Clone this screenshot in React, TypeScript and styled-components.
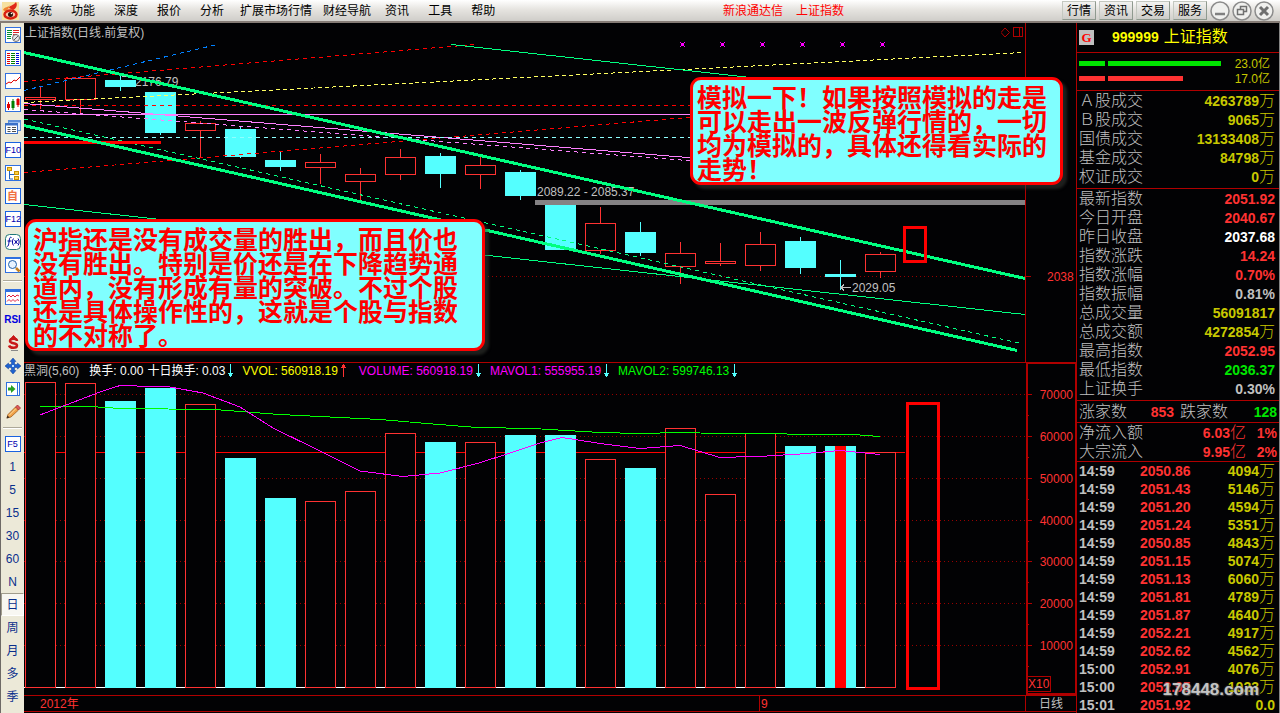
import React from "react";
import styled, { createGlobalStyle, css } from "styled-components";

const RED = "#ff3232";
const LINE = "#b00000";
const CYAN = "#54ffff";
const GREEN = "#00ff80";
const GRAY = "#c0c0c0";
const OLIVE = "#c8c800";
const LIME = "#00e600";

const GlobalStyle = createGlobalStyle`
  * { box-sizing: border-box; }
  body {
    margin: 0;
    background: #020204;
    color: ${GRAY};
    font-family: "Liberation Sans", "Noto Sans CJK SC", sans-serif;
    font-size: 12px;
    line-height: 16px;
  }
  button { font-family: inherit; margin: 0; }
`;

/* ---------- page frame ---------- */

const Page = styled.div`
  display: flex;
  flex-direction: column;
  min-height: 100vh;
`;

const Body = styled.div`
  display: flex;
  flex: 1;
`;

/* ---------- menu bar ---------- */

const MenuBar = styled.header`
  display: flex;
  align-items: center;
  height: 23px;
  padding-left: 2px;
  background: linear-gradient(#ffffff, #e6e4e0 45%, #cfcdc9);
  border-bottom: 2px solid #857c76;
`;

const Menu = styled.nav`
  display: flex;
`;

const MenuItem = styled.button<{ $wide?: boolean }>`
  border: 0;
  background: none;
  color: #000;
  font-size: 12px;
  line-height: 20px;
  padding: ${(p) => (p.$wide ? "0 5px 0 6px" : "0 10px 0 9px")};
`;

const TitleLinks = styled.div`
  display: flex;
  flex: 1;
  justify-content: center;
  gap: 13px;
`;

const TitleLink = styled.a`
  color: #f00;
  text-decoration: none;
  line-height: 20px;
`;

const QuickButtons = styled.div`
  display: flex;
  align-items: center;
  gap: 3px;
  padding-right: 7px;
`;

const QuickButton = styled.button`
  width: 34px;
  height: 19px;
  padding: 0;
  font-size: 12px;
  line-height: 16px;
  color: #000;
  background: linear-gradient(#f2f2f0, #cdccc8);
  border: 1px solid #8f9a8f;
  border-top-color: #c4c8c0;
  border-left-color: #c4c8c0;
`;

const WindowButton = styled.button`
  display: flex;
  width: 19px;
  height: 20px;
  padding: 0;
  border: 0;
  background: none;
  svg { overflow: visible; }
`;

/* ---------- left tool bar ---------- */

const ToolBar = styled.nav`
  display: flex;
  flex-direction: column;
  flex: none;
  width: 24px;
  background: #ece9d8;
  border-left: 1px solid #6e6a66;
`;

const Tool = styled.button<{ $active?: boolean; $bold?: boolean }>`
  display: flex;
  align-items: center;
  justify-content: center;
  height: 23px;
  padding: 0;
  border: 1px solid transparent;
  background: none;
  color: #0a2f8c;
  font-size: ${(p) => (p.$bold ? 10 : 12)}px;
  line-height: 16px;
  ${(p) => p.$bold && css`color: #0000e0; font-weight: bold;`}
  ${(p) =>
    p.$active &&
    css`
      background: #f8f7f2;
      border-color: #a09c8c #fff #fff #a09c8c;
    `}
`;

const ToolSeparator = styled.hr`
  width: 19px;
  height: 2px;
  margin: 4px 1px 3px 2px;
  border: 0;
  border-top: 1px solid #aca899;
  border-bottom: 1px solid #fff;
`;

const ToolBadge = styled.span<{ $orange?: boolean }>`
  width: 16px;
  height: 16px;
  border: 1px solid #1a62e0;
  background: #fff;
  color: ${(p) => (p.$orange ? "#f07040" : "#0000b0")};
  font-size: ${(p) => (p.$orange ? 11 : 9)}px;
  font-weight: ${(p) => (p.$orange ? 700 : 400)};
  line-height: 14px;
  text-align: center;
`;

/* ---------- charts ---------- */

const Charts = styled.main`
  flex: 1;
  min-width: 0;
`;

const PricePane = styled.section`
  position: relative;
  border-bottom: 1px solid ${LINE};
`;

const Drawing = styled.svg`
  display: block;
  width: 100%;
  height: auto;
  font-family: "Liberation Sans", "Noto Sans CJK SC", sans-serif;
  font-size: 12px;
`;

const PaneTitleRow = styled.div`
  display: flex;
  height: 18px;
`;

const PaneTitle = styled.h1`
  flex: 1;
  margin: 0;
  padding-left: 1px;
  font-size: 12px;
  font-weight: 400;
  line-height: 20px;
`;

const PaneMarks = styled.svg`
  width: 24px;
  height: 18px;
`;

const AxisCell = styled.div<{ $thick?: boolean }>`
  width: ${(p) => (p.$thick ? 50 : 51)}px;
  border-left: ${(p) => (p.$thick ? 2 : 1)}px solid ${LINE};
  ${(p) =>
    p.$thick &&
    css`
      border-top: 1px solid ${LINE};
      border-right: 1px solid ${LINE};
    `}
`;

const Callout = styled.p<{ $side: "left" | "right" }>`
  position: absolute;
  margin: 0;
  border: 3px solid #f00;
  border-radius: 11px;
  background: #80ffff;
  box-shadow: 4px 4px 3px rgba(60, 62, 56, 0.5);
  color: #f00;
  font-size: 25px;
  font-weight: 700;
  line-height: 24px;
  white-space: nowrap;
  ${(p) =>
    p.$side === "left"
      ? css`left: 1px; top: 196px; width: 460px; padding: 6px 5px 0 5px;`
      : css`right: 13px; top: 54px; width: 373px; padding: 6px 4px 0 4px;`}
`;

const VolumeHeader = styled.div`
  display: flex;
  height: 16px;
`;

const Readings = styled.div`
  display: flex;
  flex: 1;
  white-space: pre;
`;

const Reading = styled.span<{ $color: string; $gap: number }>`
  display: flex;
  gap: 2px;
  color: ${(p) => p.$color};
  margin-right: ${(p) => p.$gap}px;
`;

const TimeAxis = styled.footer`
  display: flex;
  height: 17px;
  border-top: 1px solid ${LINE};
  border-bottom: 1px solid ${LINE};
  color: ${RED};
`;

const TimeCell = styled.div<{ $grow?: number; $kind: "year" | "month" | "period" }>`
  ${(p) => (p.$grow ? `flex: ${p.$grow} 1 0;` : "flex: none; width: 51px;")}
  ${(p) => p.$kind === "year" && "padding-left: 16px;"}
  ${(p) => p.$kind !== "year" && `border-left: 1px solid ${LINE};`}
  ${(p) => p.$kind === "month" && "padding-left: 1px;"}
  ${(p) => p.$kind === "period" && `text-align: center; color: ${GRAY};`}
`;

/* ---------- quote panel ---------- */

const Quotes = styled.aside`
  position: relative;
  flex: none;
  width: 204px;
  border-left: 1px solid ${LINE};
  border-right: 1px solid #848484;
`;

const Group = styled.section<{ $pad?: string }>`
  padding: ${(p) => p.$pad ?? "0"};
  border-bottom: 1px solid ${LINE};
`;

const StockTitle = styled.h2`
  display: flex;
  align-items: center;
  height: 28px;
  margin: 0;
  padding-left: 2px;
  color: #ff0;
  font-size: 16px;
  font-weight: 400;
`;

const StockMark = styled.span`
  width: 15px;
  margin-right: 18px;
  background: ${GRAY};
  color: #f00;
  font: bold 13px/15px "Liberation Serif", serif;
  text-align: center;
`;

const StockCode = styled.b`
  margin-right: 5px;
  font-size: 14px;
`;

const FlowRow = styled.div`
  display: flex;
  align-items: center;
  gap: 3px;
  height: 15px;
  padding: 0 9px 0 2px;
  color: ${OLIVE};
`;

const FlowBar = styled.span<{ $w: number; $color: string }>`
  width: ${(p) => p.$w}px;
  height: 5px;
  background: ${(p) => p.$color};
`;

const FlowValue = styled.span`
  margin-left: auto;
`;

const Table = styled.table<{ $row: number }>`
  width: 100%;
  border-collapse: collapse;
  tr { height: ${(p) => p.$row}px; }
  th, td { padding: 0; line-height: 16px; white-space: nowrap; }
`;

const Label = styled.th<{ $w?: number }>`
  && { padding-left: 2px; }
  ${(p) => p.$w && `width: ${p.$w}px;`}
  color: ${GRAY};
  font-size: 16px;
  font-weight: 300;
  text-align: left;
`;

const Value = styled.td<{ $color: string; $flush?: boolean; $w?: number }>`
  && { padding-right: ${(p) => (p.$flush ? 2 : 4)}px; }
  ${(p) => p.$w && `width: ${p.$w}px;`}
  color: ${(p) => p.$color};
  font-size: 14px;
  font-weight: 700;
  text-align: right;
`;

const Unit = styled.span`
  font-size: 16px;
  font-weight: 300;
`;

const TickTime = styled.td`
  && { padding-left: 2px; }
  width: 63px;
  color: ${GRAY};
  font-size: 14px;
  font-weight: 700;
`;

const TickPrice = styled.td`
  color: ${RED};
  font-size: 14px;
  font-weight: 700;
`;

const Watermark = styled.div`
  position: absolute;
  right: 20px;
  bottom: 12px;
  color: rgba(214, 214, 214, 0.9);
  font-size: 17px;
  font-weight: 700;
  line-height: 24px;
  text-shadow: 0 0 2px #555, 1px 1px 1px #444;
`;

/* ---------- data ---------- */

type Candle = { up?: boolean; o: number; c: number; hi: number; lo: number; vol: number };

// Body top, body bottom, wick top, wick bottom, volume bar top.
const candles: Candle[] = [
  { up: true, o: 97, c: 100, hi: 86, lo: 109, vol: 382 },
  { up: true, o: 78, c: 100, hi: 78, lo: 113, vol: 383 },
  { o: 80, c: 87, hi: 76, lo: 91, vol: 401 },
  { o: 92, c: 133, hi: 92, lo: 135, vol: 388 },
  { up: true, o: 123, c: 131, hi: 121, lo: 158, vol: 404 },
  { o: 129, c: 157, hi: 127, lo: 158, vol: 458 },
  { o: 160, c: 167, hi: 151, lo: 171, vol: 498 },
  { up: true, o: 162, c: 168, hi: 154, lo: 184, vol: 501 },
  { up: true, o: 174, c: 182, hi: 168, lo: 200, vol: 491 },
  { up: true, o: 157, c: 175, hi: 149, lo: 180, vol: 433 },
  { o: 156, c: 174, hi: 153, lo: 188, vol: 442 },
  { up: true, o: 165, c: 175, hi: 157, lo: 189, vol: 442 },
  { o: 172, c: 196, hi: 170, lo: 200, vol: 435 },
  { o: 205, c: 250, hi: 205, lo: 250, vol: 435 },
  { up: true, o: 223, c: 251, hi: 207, lo: 254, vol: 459 },
  { o: 232, c: 253, hi: 222, lo: 256, vol: 468 },
  { up: true, o: 253, c: 267, hi: 242, lo: 284, vol: 428 },
  { up: true, o: 261, c: 264, hi: 243, lo: 266, vol: 494 },
  { up: true, o: 244, c: 266, hi: 232, lo: 271, vol: 433 },
  { o: 241, c: 268, hi: 237, lo: 274, vol: 446 },
  { o: 274, c: 277, hi: 260, lo: 290, vol: 446 },
  { up: true, o: 254, c: 272, hi: 252, lo: 278, vol: 452 },
];
const BAR_W = 31;
const barX = (i: number) => 25 + i * 40;

const volumeScale = [
  { y: 394, label: "70000" },
  { y: 436, label: "60000" },
  { y: 478, label: "50000" },
  { y: 520, label: "40000" },
  { y: 561, label: "30000" },
  { y: 603, label: "20000" },
  { y: 645, label: "10000" },
];

type Row = { label: string; value: string; unit?: string; color: string };

const turnover: Row[] = [
  { label: "Ａ股成交", value: "4263789", unit: "万", color: OLIVE },
  { label: "Ｂ股成交", value: "9065", unit: "万", color: OLIVE },
  { label: "国债成交", value: "13133408", unit: "万", color: OLIVE },
  { label: "基金成交", value: "84798", unit: "万", color: OLIVE },
  { label: "权证成交", value: "0", unit: "万", color: OLIVE },
];

const index: Row[] = [
  { label: "最新指数", value: "2051.92", color: RED },
  { label: "今日开盘", value: "2040.67", color: RED },
  { label: "昨日收盘", value: "2037.68", color: "#fff" },
  { label: "指数涨跌", value: "14.24", color: RED },
  { label: "指数涨幅", value: "0.70%", color: RED },
  { label: "指数振幅", value: "0.81%", color: GRAY },
  { label: "总成交量", value: "56091817", color: OLIVE },
  { label: "总成交额", value: "4272854", unit: "万", color: OLIVE },
  { label: "最高指数", value: "2052.95", color: RED },
  { label: "最低指数", value: "2036.37", color: LIME },
  { label: "上证换手", value: "0.30%", color: GRAY },
];

const inflow = [
  { label: "净流入额", value: "6.03", pct: "1%" },
  { label: "大宗流入", value: "9.95", pct: "2%" },
];

const ticks: [string, string, string][] = [
  ["14:59", "2050.86", "4094"],
  ["14:59", "2051.43", "5146"],
  ["14:59", "2051.20", "4594"],
  ["14:59", "2051.24", "5351"],
  ["14:59", "2050.85", "4843"],
  ["14:59", "2051.15", "5074"],
  ["14:59", "2051.13", "6060"],
  ["14:59", "2051.81", "4789"],
  ["14:59", "2051.87", "4640"],
  ["14:59", "2052.21", "4917"],
  ["14:59", "2052.62", "4562"],
  ["15:00", "2052.91", "4076"],
  ["15:00", "2052.95", "1023"],
  ["15:01", "2051.92", "0.0"],
];

/* ---------- icons ---------- */

const Icon = ({ children }: { children: React.ReactNode }) => (
  <svg width="16" height="16" viewBox="0 0 16 16" fill="none" aria-hidden="true">
    {children}
  </svg>
);

const Box = () => <rect x="0.5" y="0.5" width="15" height="15" fill="#fff" stroke="#3070e0" />;

const QuoteIcon = () => (
  <Icon>
    <Box />
    <path d="M2 3.5h5M2 5.5h5M2 7.5h5M2 9.5h4M2 11.5h4" stroke="#009030" />
    <path d="M8 3.5h6M8 5.5h6M8 7.5h4" stroke="#e02020" />
    <circle cx="11" cy="11" r="3.5" fill="#e8e8e8" stroke="#707070" />
    <path d="M9 13l4-4" stroke="#606060" />
  </Icon>
);
const ListIcon = () => (
  <Icon>
    <Box />
    <path d="M2 3.5h3M2 5.5h3M2 7.5h3M2 9.5h3M2 11.5h3M2 13.5h3" stroke="#e00000" />
    <path d="M6 3.5h4M6 5.5h4M6 7.5h4M6 9.5h4M6 11.5h4M6 13.5h4" stroke="#008000" />
    <path d="M11 3.5h3M11 5.5h3M11 7.5h3M11 9.5h3M11 11.5h3M11 13.5h3" stroke="#0000e0" />
  </Icon>
);
const TrendIcon = () => (
  <Icon>
    <Box />
    <path d="M1 11l3-2 2 1 3-3 2 1 4-4" stroke="#e00000" />
  </Icon>
);
const CandleIcon = () => (
  <Icon>
    <Box />
    <path d="M3.5 6v8M13 2v9" stroke="#e00000" />
    <path d="M8 3v11" stroke="#008000" />
    <rect x="2" y="8" width="3" height="4" fill="#e00000" />
    <rect x="6.500" y="5" width="3" height="7" fill="#008000" />
    <rect x="11.500" y="3" width="3" height="6" fill="#e00000" />
  </Icon>
);
const WindowsIcon = () => (
  <Icon>
    <rect x="3.5" y="1.500" width="12" height="10" fill="#dcebff" stroke="#5a8cd8" />
    <path d="M4 2.500h11" stroke="#5a8cd8" strokeWidth="2" />
    <rect x="0.5" y="4.5" width="12" height="10" fill="#fff" stroke="#3a70c8" />
    <path d="M1 5.500h11" stroke="#3a70c8" strokeWidth="2" />
    <path d="M2.500 8.500h3M7 8.500h4M2.500 10.500h3M7 10.500h4M2.500 12.500h3M7 12.500h4" stroke="#505050" />
  </Icon>
);
const TreeIcon = () => (
  <Icon>
    <Box />
    <path d="M4.500 6v8H8M4.500 9.500H9" stroke="#2060c0" />
    <rect x="2.500" y="2.500" width="4" height="3" fill="#ffd040" stroke="#c89000" />
    <rect x="9.500" y="6.500" width="4" height="3" fill="#ffd040" stroke="#c89000" />
    <rect x="9.500" y="11.500" width="4" height="3" fill="#ffd040" stroke="#c89000" />
  </Icon>
);
const FormulaIcon = () => (
  <Icon>
    <rect x="0.5" y="0.5" width="15" height="15" rx="4" fill="#fff" stroke="#207878" />
    <path d="M6.500 3.500C4.500 2.500 4.500 5 4 8s-.5 5-2 4M2.500 7h4" stroke="#0000a0" />
    <path d="M8.500 4.500c-1.500 2-1.500 5 0 7M13 4.500c1.500 2 1.500 5 0 7M9.500 6l3 4M12.500 6l-3 4" stroke="#0000a0" />
  </Icon>
);
const SearchIcon = () => (
  <Icon>
    <Box />
    <path d="M1 1.500h14" stroke="#3070e0" />
    <circle cx="7.500" cy="7.500" r="4" fill="#e8f4ff" stroke="#2060a8" />
    <path d="M11 11l3.500 3.500" stroke="#c08020" strokeWidth="2.500" />
  </Icon>
);
const WaveIcon = () => (
  <Icon>
    <Box />
    <path d="M1 2h14" stroke="#3070e0" strokeWidth="2" />
    <path d="M2 8l2-2 2 2 2-2 2 2 2-2 2 1M2 12.500l2-2 2 2 2-2 2 2 2-2 2 1" stroke="#e02040" />
  </Icon>
);
const DollarIcon = () => (
  <Icon>
    <path d="M12 6c0-3-7-3-7 0s7 1.500 7 4.500-7 3-8 0" stroke="#c81818" strokeWidth="2.500" />
    <path d="M8.500 0.500L5.500 4h6z" fill="#c81818" stroke="#c81818" />
    <path d="M6 15.500h7" stroke="#888" />
  </Icon>
);
const MoveIcon = () => (
  <Icon>
    <path
      d="M8 0l3 3.500H9.500V6.500H12.500V5L16 8l-3.500 3V9.500H9.500v3H11L8 16l-3-3.500h1.500v-3h-3V11L0 8l3.500-3v1.500h3v-3H5z"
      fill="#1e62d0"
      stroke="#0a3c98"
      strokeWidth="0.500"
    />
    <rect x="7" y="7" width="2" height="2" fill="#bfe0ff" />
  </Icon>
);
const PanelIcon = () => (
  <Icon>
    <rect x="1.500" y="1.500" width="13" height="13" fill="#fff" stroke="#3070e0" />
    <path d="M12.500 2v12" stroke="#3070e0" />
    <path d="M3 6.500h3V4l4.500 4L6 12V9.500H3z" fill="#28a020" />
  </Icon>
);
const PencilIcon = () => (
  <Icon>
    <path d="M2 14l1-3.500L10.500 3l3 3L6 13z" fill="#f0a048" stroke="#a06020" strokeWidth="0.800" />
    <path d="M10.500 3l2-2 3 3-2 2z" fill="#e05858" stroke="#a03030" strokeWidth="0.800" />
    <path d="M1.500 14.500l1-3 2 2z" fill="#403020" />
    <path d="M4 11.500l7-7" stroke="#ffe0a0" />
  </Icon>
);

const Arrow = ({ up }: { up?: boolean }) => (
  <svg width="7" height="16" viewBox="0 0 7 16" shapeRendering="crispEdges" aria-hidden="true">
    <rect x="3" y="1" width="1" height="13" fill={up ? RED : CYAN} />
    {up ? (
      <path d="M1 5L3 1h1l2 4z" fill={RED} />
    ) : (
      <path d="M1 10h5l-2 4H3z" fill={CYAN} />
    )}
  </svg>
);

const LogoIcon = () => (
  <svg width="17" height="18" viewBox="0 0 17 18" aria-hidden="true">
    <rect width="17" height="18" fill="#f6e0a0" />
    <path d="M7 6C8 3 11 4 14 0c2 3 0 7-3 8z" fill="#e02818" />
    <path d="M1 8c2-4 5-2 7-5-1 4-3 4-4 7z" fill="#f08030" />
    <ellipse cx="8.500" cy="12.500" rx="6" ry="4" fill="#f8c8b0" stroke="#d82010" strokeWidth="2.500" />
    <circle cx="8.500" cy="12.500" r="2.500" fill="#301008" />
    <circle cx="9.500" cy="11.500" r="0.800" fill="#fff" />
  </svg>
);

const WindowGlyph = ({ kind }: { kind: "min" | "restore" | "close" }) => (
  <svg width="20" height="20" viewBox="0 0 20 20" fill="none" aria-hidden="true">
    <circle cx="10" cy="10" r="9" fill="#f0f0ee" stroke="#8c8c8c" strokeWidth="1.500" />
    {kind === "min" && <path d="M5 13h10" stroke="#808080" strokeWidth="2.500" />}
    {kind === "restore" && (
      <path d="M8.500 8.500v-3h6v5h-3M5.500 8.500h6v5h-6z" stroke="#707070" strokeWidth="1.500" />
    )}
    {kind === "close" && <path d="M6 6l8 8M14 6l-8 8" stroke="#707070" strokeWidth="3" />}
  </svg>
);

/* ---------- chart drawings ---------- */

const PriceChart = () => (
  <Drawing viewBox="24 41 1052 321" role="img" aria-label="上证指数 日线">
    <g fill={GRAY}>
      <text x="135" y="86">2176.79</text>
      <text x="537" y="196">2089.22 - 2085.37</text>
      <text x="852" y="292">2029.05</text>
    </g>
    <text x="1047" y="281" fill={RED}>2038</text>
    <g shapeRendering="crispEdges" fill="none">
      <path d="M1025.5 41V362" stroke={LINE} />
      <path d="M24 276.500H1026" stroke="#980000" strokeDasharray="1 3" />
      <path d="M1026 276.500h5" stroke={LINE} />

      {candles.map((k, i) => {
        const x = barX(i);
        const color = k.up ? RED : CYAN;
        return (
          <g key={i} fill={color}>
            <rect x={x + 15} y={k.hi} width="1" height={Math.max(0, k.o - k.hi)} />
            <rect x={x + 15} y={k.c} width="1" height={Math.max(0, k.lo - k.c)} />
            {k.up ? (
              <rect x={x + 0.5} y={k.o + 0.5} width={BAR_W - 1} height={k.c - k.o - 1} fill="#020204" stroke={color} />
            ) : (
              <rect x={x} y={k.o} width={BAR_W} height={k.c - k.o} />
            )}
          </g>
        );
      })}

      <path d="M24 90.500L217 44.500" stroke="#0080ff" strokeDasharray="4 4" />
      <path d="M24 81.500L475 44.500" stroke="#f00" strokeDasharray="4 4" />
      <path d="M24 102.500L1023 52.500" stroke="#ffff60" strokeDasharray="4 3" />
      <path d="M24 105.500H700" stroke="#f00" strokeDasharray="4 4" />
      <path d="M24 172.500L700 116.500" stroke="#f00" strokeDasharray="4 4" />
      <path d="M24 114.500H700M24 103.500L700 158.500" stroke="#ff80ff" />
      <path d="M24 109.500L700 161.500" stroke="#ff80ff" strokeDasharray="4 4" />
      <path d="M24 137.500H700" stroke="#90ffff" strokeDasharray="4 4" />
      <path d="M451 44.500L760 78.500M24 204.500L1025 314.500" stroke={GREEN} />
      <path d="M24 119L1023 344" stroke={GREEN} strokeDasharray="4 4" />
      <path d="M24 142.500H161" stroke="#f00" strokeWidth="3" />
      <path d="M535 202.500H1025" stroke="#848284" strokeWidth="5" />
      <path d="M24 52.500L1025 278.500M24 125.500L1017 350.500" stroke={GREEN} strokeWidth="3" />
      <rect x="904.500" y="227.500" width="21" height="34" stroke="#f00" strokeWidth="3" />
      {[681, 721, 761, 801, 841, 881].map((x) => (
        <g key={x} fill="#f0f">
          <path d={`M${x} 43h3v3h-3z`} />
          <path d={`M${x - 1} 42h1v1h-1zM${x + 3} 42h1v1h-1zM${x - 1} 46h1v1h-1zM${x + 3} 46h1v1h-1z`} />
        </g>
      ))}
      <path d="M121.500 76.500h4M841 287.500h10M844 284.500l-3 3 3 3" stroke={GRAY} />
    </g>
  </Drawing>
);

const VolumeChart = () => (
  <Drawing viewBox="24 379 1052 316" role="img" aria-label="成交量">
    <g shapeRendering="crispEdges" fill="none">
      {volumeScale.map(({ y }) => (
        <path key={y} d={`M24 ${y + 0.5}H1026`} stroke="#980000" strokeDasharray="1 3" />
      ))}
      <path d="M24 452.500H905" stroke="#f00" />
      <path d="M24 687.500H866" stroke="#fff" />
      {candles.map((k, i) =>
        k.up ? (
          <rect
            key={i}
            x={barX(i) + 0.5}
            y={k.vol + 0.5}
            width={BAR_W - 1}
            height={687 - k.vol}
            fill="#020204"
            stroke={RED}
          />
        ) : (
          <rect key={i} x={barX(i)} y={k.vol} width={BAR_W} height={688 - k.vol} fill={CYAN} />
        ),
      )}
      <rect x="835" y="446" width="11" height="242" fill="#f00" />
      <rect x="907.500" y="403.500" width="31" height="285" stroke="#f00" strokeWidth="3" />
      <polyline
        points="40,406.5 91,406.5 120,408.5 215,409.5 240,411.5 280,414.5 340,417.5 380,419.5 427,423.5 477,427.5 533,428.5 600,432.5 640,433.5 680,432.5 720,433.5 853,434.5 880,436.5"
        stroke="#0f0"
      />
      <polyline
        points="40,415 66,405 100,392 120,385.5 170,387 203,393 240,407 273,428 320,451 360,471 403,476.5 440,473 479,463 507,454 540,443 562,437.5 600,443.5 640,448.5 680,445.5 720,457.5 767,456 800,454 840,450.5 880,454.5"
        stroke="#f0f"
      />
      <path d="M1027 379V695M1026 694H1076M1075.500 379V694" stroke={LINE} strokeWidth="2" />
      {volumeScale.map(({ y }) => (
        <path key={y} d={`M1028 ${y + 0.5}h4M1028 ${y + 21.5}h1`} stroke={LINE} />
      ))}
      <rect x="1027.500" y="676.500" width="23" height="15" stroke={LINE} />
    </g>
    <g fill={RED}>
      {volumeScale.map(({ y, label }) => (
        <text key={y} x="1073" y={y + 5} textAnchor="end">
          {label}
        </text>
      ))}
      <text x="1028" y="688">X10</text>
    </g>
  </Drawing>
);

/* ---------- parts ---------- */

const DataTable = ({ rows }: { rows: Row[] }) => (
  <Table $row={19}>
    <tbody>
      {rows.map((r) => (
        <tr key={r.label}>
          <Label scope="row">{r.label}</Label>
          <Value $color={r.color}>
            {r.value}
            {r.unit && <Unit>{r.unit}</Unit>}
          </Value>
        </tr>
      ))}
    </tbody>
  </Table>
);

const iconTools: [string, React.ReactNode][] = [
  ["行情报价", <QuoteIcon />],
  ["分类列表", <ListIcon />],
  ["分时走势", <TrendIcon />],
  ["K线图", <CandleIcon />],
  ["多窗口", <WindowsIcon />],
  ["基本资料", <ToolBadge>F10</ToolBadge>],
  ["板块树", <TreeIcon />],
  ["自选股", <ToolBadge $orange>自</ToolBadge>],
  ["委托", <ToolBadge>F12</ToolBadge>],
  ["公式", <FormulaIcon />],
  ["查找", <SearchIcon />],
];

const drawTools: [string, React.ReactNode][] = [
  ["价格", <DollarIcon />],
  ["移动", <MoveIcon />],
  ["面板", <PanelIcon />],
  ["画线", <PencilIcon />],
];

const periods = ["1", "5", "15", "30", "60", "N", "日", "周", "月", "多", "季"];

export default function App() {
  return (
    <Page>
      <GlobalStyle />
      <MenuBar>
        <LogoIcon />
        <Menu>
          {["系统", "功能", "深度", "报价", "分析"].map((m) => (
            <MenuItem key={m}>{m}</MenuItem>
          ))}
          <MenuItem $wide>扩展市场行情</MenuItem>
          <MenuItem $wide>财经导航</MenuItem>
          {["资讯", "工具", "帮助"].map((m) => (
            <MenuItem key={m}>{m}</MenuItem>
          ))}
        </Menu>
        <TitleLinks>
          <TitleLink href="#home">新浪通达信</TitleLink>
          <TitleLink href="#index">上证指数</TitleLink>
        </TitleLinks>
        <QuickButtons>
          {["行情", "资讯", "交易", "服务"].map((b) => (
            <QuickButton key={b}>{b}</QuickButton>
          ))}
          <WindowButton aria-label="最小化"><WindowGlyph kind="min" /></WindowButton>
          <WindowButton aria-label="还原"><WindowGlyph kind="restore" /></WindowButton>
          <WindowButton aria-label="关闭"><WindowGlyph kind="close" /></WindowButton>
        </QuickButtons>
      </MenuBar>

      <Body>
        <ToolBar>
          {iconTools.map(([name, icon]) => (
            <Tool key={name} aria-label={name}>{icon}</Tool>
          ))}
          <ToolSeparator />
          <Tool aria-label="指标"><WaveIcon /></Tool>
          <Tool $bold>RSI</Tool>
          {drawTools.map(([name, icon]) => (
            <Tool key={name} aria-label={name}>{icon}</Tool>
          ))}
          <ToolSeparator />
          <Tool aria-label="F5"><ToolBadge>F5</ToolBadge></Tool>
          {periods.map((p) => (
            <Tool key={p} $active={p === "日"}>{p}</Tool>
          ))}
        </ToolBar>

        <Charts>
          <PricePane>
            <PaneTitleRow>
              <PaneTitle>上证指数(日线.前复权)</PaneTitle>
              <PaneMarks viewBox="0 0 24 18" fill="none" stroke={LINE} aria-hidden="true">
                <path d="M4 5l4.500 4.500L4 14l-4-4.500z" />
                <path d="M12.500 4.500h9v9h-9zM18.500 4.500v9" shapeRendering="crispEdges" />
              </PaneMarks>
              <AxisCell />
            </PaneTitleRow>
            <PriceChart />
            <Callout $side="left">
              沪指还是没有成交量的胜出，而且价也<br />
              没有胜出。特别是价还是在下降趋势通<br />
              道内，没有形成有量的突破。不过个股<br />
              还是具体操作性的，这就是个股与指数<br />
              的不对称了。
            </Callout>
            <Callout $side="right">
              模拟一下！如果按照模拟的走是<br />
              可以走出一波反弹行情的，一切<br />
              均为模拟的，具体还得看实际的<br />
              走势！
            </Callout>
          </PricePane>

          <section>
            <VolumeHeader>
              <Readings>
                <Reading $color={GRAY} $gap={10}>黑洞(5,60)</Reading>
                <Reading $color="#fff" $gap={4}>换手: 0.00</Reading>
                <Reading $color="#fff" $gap={8}>十日换手: 0.03<Arrow /></Reading>
                <Reading $color="#ff0" $gap={12}>VVOL: 560918.19<Arrow up /></Reading>
                <Reading $color="#f0f" $gap={8}>VOLUME: 560918.19<Arrow /></Reading>
                <Reading $color="#f0f" $gap={8}>MAVOL1: 555955.19<Arrow /></Reading>
                <Reading $color="#0f0" $gap={0}>MAVOL2: 599746.13<Arrow /></Reading>
              </Readings>
              <AxisCell $thick />
            </VolumeHeader>
            <VolumeChart />
          </section>

          <TimeAxis>
            <TimeCell $kind="year" $grow={719}>2012年</TimeCell>
            <TimeCell $kind="month" $grow={264}>9</TimeCell>
            <TimeCell $kind="period">日线</TimeCell>
          </TimeAxis>
        </Charts>

        <Quotes>
          <Group $pad="0 0 1px">
            <StockTitle>
              <StockMark>G</StockMark>
              <StockCode>999999</StockCode>上证指数
            </StockTitle>
          </Group>
          <Group $pad="3px 0 4px">
            <FlowRow>
              <FlowBar $w={26} $color={LIME} />
              <FlowBar $w={113} $color={LIME} />
              <FlowValue>23.0亿</FlowValue>
            </FlowRow>
            <FlowRow>
              <FlowBar $w={26} $color={RED} />
              <FlowBar $w={75} $color={RED} />
              <FlowValue>17.0亿</FlowValue>
            </FlowRow>
          </Group>
          <Group $pad="0 0 2px">
            <DataTable rows={turnover} />
          </Group>
          <Group $pad="0 0 2px">
            <DataTable rows={index} />
          </Group>
          <Group $pad="1px 0">
            <Table $row={19}>
              <tbody>
                <tr>
                  <Label scope="row">涨家数</Label>
                  <Value $color={RED}>853</Value>
                  <Label scope="row" $w={50}>跌家数</Label>
                  <Value $color={LIME} $flush $w={51}>128</Value>
                </tr>
              </tbody>
            </Table>
          </Group>
          <Group>
            <Table $row={19}>
              <tbody>
                {inflow.map((r) => (
                  <tr key={r.label}>
                    <Label scope="row">{r.label}</Label>
                    <Value $color={RED}>
                      {r.value}
                      <Unit>亿</Unit>
                    </Value>
                    <Value $color={RED} $flush $w={29}>{r.pct}</Value>
                  </tr>
                ))}
              </tbody>
            </Table>
          </Group>
          <Table $row={18}>
            <tbody>
              {ticks.map(([time, price, amount], i) => (
                <tr key={i}>
                  <TickTime>{time}</TickTime>
                  <TickPrice>{price}</TickPrice>
                  <Value $color={OLIVE}>
                    {amount}
                    {amount !== "0.0" && <Unit>万</Unit>}
                  </Value>
                </tr>
              ))}
            </tbody>
          </Table>
          <Watermark>178448.com</Watermark>
        </Quotes>
      </Body>
    </Page>
  );
}
